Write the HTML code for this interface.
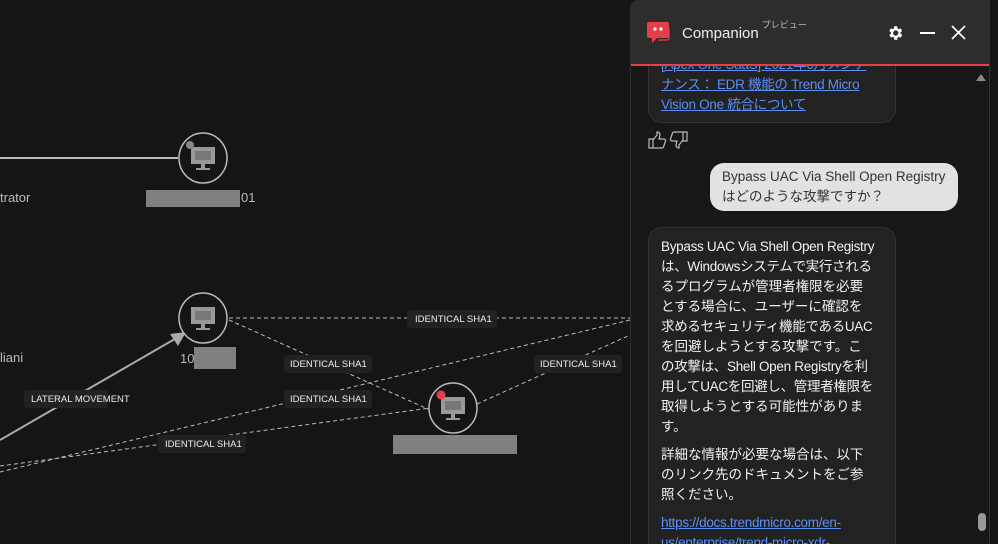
<!DOCTYPE html>
<html><head><meta charset="utf-8"><style>
*{margin:0;padding:0;box-sizing:border-box}
body{width:998px;height:544px;overflow:hidden;background:#151515;font-family:"Liberation Sans","Noto Sans CJK JP",sans-serif;position:relative}
svg.g{position:absolute;left:0;top:0}
.panel{position:absolute;left:630px;top:0;width:360px;height:544px;background:#171717;border-left:1px solid #2e2e2e;border-right:1px solid #333;border-top-left-radius:8px;overflow:hidden}
.hdr{position:absolute;left:0;top:0;width:360px;height:66px;background:#2d2d2d;border-bottom:2px solid #e5404a;z-index:2}
.title{position:absolute;left:51px;top:22px;color:#eee;font-size:15px}
.title sup{font-size:9px;color:#bbb;position:relative;top:-4px;margin-left:3px}
.bub{position:absolute;background:#222;border:1px solid #333;border-radius:14px;color:#f2f2f2;font-size:13.5px;line-height:20px;white-space:nowrap}
.bub .l{letter-spacing:-0.3px}
a{color:#5b8ff2;text-decoration:underline}
.user{position:absolute;left:79px;top:163px;width:248px;height:48px;background:#e2e2e2;border-radius:14px;color:#333;font-size:13.5px;line-height:20px;padding:4px 12px;white-space:nowrap}
</style></head><body>
<svg class="g" width="630" height="544" font-family="Liberation Sans,sans-serif">
<g stroke="#bbb" stroke-width="1" stroke-dasharray="4,3" fill="none">
<line x1="229" y1="318" x2="630" y2="318"/>
<line x1="229" y1="320" x2="430" y2="410"/>
<line x1="0" y1="472" x2="630" y2="320"/>
<line x1="0" y1="466" x2="430" y2="408"/>
<line x1="477" y1="404" x2="630" y2="335"/>
</g>
<line x1="0" y1="158" x2="178" y2="158" stroke="#bbb" stroke-width="2"/>
<line x1="0" y1="440" x2="180" y2="336" stroke="#aaa" stroke-width="2"/>
<polygon points="186,332 170,334 178,346" fill="#aaa"/>
<g fill="#151515" stroke="#bbb" stroke-width="1.5">
<ellipse cx="203" cy="158" rx="24" ry="25"/>
<ellipse cx="203" cy="318" rx="24" ry="25"/>
<ellipse cx="453" cy="408" rx="24" ry="25"/>
</g>
<g fill="#999">
<rect x="191" y="147" width="24" height="17"/><rect x="201" y="164" width="4" height="4"/><rect x="196" y="168" width="14" height="2"/>
<rect x="191" y="307" width="24" height="17"/><rect x="201" y="324" width="4" height="4"/><rect x="196" y="328" width="14" height="2"/>
<rect x="441" y="397" width="24" height="17"/><rect x="451" y="414" width="4" height="4"/><rect x="446" y="418" width="14" height="2"/>
</g>
<g fill="#777"><rect x="195" y="151" width="16" height="9"/><rect x="195" y="311" width="16" height="9"/><rect x="445" y="401" width="16" height="9"/></g>
<circle cx="190" cy="145" r="4" fill="#888"/>
<circle cx="441" cy="395" r="4.5" fill="#e5404a"/>
<rect x="146" y="190" width="94" height="17" fill="#808080"/>
<rect x="194" y="347" width="42" height="22" fill="#808080"/>
<rect x="393" y="435" width="124" height="19" fill="#808080"/>
<g fill="#bbb" font-size="13"><text x="0" y="202">trator</text><text x="241" y="202">01</text><text x="0" y="362">liani</text><text x="180" y="363">10</text></g>
<g font-size="9.5" fill="#eee">
<rect x="407" y="310" width="90" height="18" rx="3" fill="#222"/><text x="415" y="322">IDENTICAL SHA1</text>
<rect x="284" y="355" width="88" height="18" rx="3" fill="#222"/><text x="290" y="367">IDENTICAL SHA1</text>
<rect x="534" y="355" width="88" height="18" rx="3" fill="#222"/><text x="540" y="367">IDENTICAL SHA1</text>
<rect x="284" y="390" width="88" height="18" rx="3" fill="#222"/><text x="290" y="402">IDENTICAL SHA1</text>
<rect x="158" y="435" width="88" height="18" rx="3" fill="#222"/><text x="165" y="447">IDENTICAL SHA1</text>
<rect x="24" y="390" width="84" height="18" rx="3" fill="#222"/><text x="31" y="402">LATERAL MOVEMENT</text>
</g>
</svg>
<div class="panel">
<div class="hdr">
<svg style="position:absolute;left:15px;top:20px" width="26" height="26" viewBox="0 0 26 26"><path d="M3 2h18a2 2 0 0 1 2 2v12a2 2 0 0 1-2 2H11l-5 5v-5H3a2 2 0 0 1-2-2V4a2 2 0 0 1 2-2z" fill="#e5404a"/><path d="M23 8v10a2 2 0 0 1-2 2H12" stroke="#e5404a" fill="none" stroke-width="1.2"/><circle cx="9" cy="9" r="1.6" fill="#fff"/><circle cx="15" cy="9" r="1.6" fill="#fff"/></svg>
<div class="title">Companion<sup>プレビュー</sup></div>
<svg style="position:absolute;left:255px;top:24px" width="18" height="18" viewBox="0 0 24 24"><path fill="#fff" d="M19.4 13a7.5 7.5 0 0 0 0-2l2.1-1.6-2-3.5-2.5 1a7 7 0 0 0-1.7-1L15 3h-4l-.4 2.9a7 7 0 0 0-1.7 1l-2.5-1-2 3.5L6.6 11a7.5 7.5 0 0 0 0 2l-2.1 1.6 2 3.5 2.5-1a7 7 0 0 0 1.7 1L11 21h4l.4-2.9a7 7 0 0 0 1.7-1l2.5 1 2-3.5zM13 15.5A3.5 3.5 0 1 1 13 8.5a3.5 3.5 0 0 1 0 7z"/></svg>
<div style="position:absolute;left:289px;top:32px;width:15px;height:2px;background:#fff"></div>
<svg style="position:absolute;left:320px;top:25px" width="15" height="15"><path d="M1 1L14 14M14 1L1 14" stroke="#fff" stroke-width="1.7"/></svg>
</div>
<div class="bub" style="left:17px;top:20px;width:248px;height:103px;padding:34px 12px 0 12px"><a class="l">[Apex One SaaS] 2021年6月メンテ</a><br><a class="l">ナンス： EDR 機能の Trend Micro</a><br><a class="l">Vision One 統合について</a></div>
<svg style="position:absolute;left:17px;top:131px" width="40" height="18" viewBox="0 0 40 18" fill="none" stroke="#bbb" stroke-width="1.2"><path d="M1 8h4v9H1zM5 9l4-5V1c2 0 3 1 3 3l-1 4h5c1 0 2 1 1.5 2l-2 6c-.3.7-1 1-1.5 1H5"/><path d="M39 10h-4V1h4zM35 9l-4 5v3c-2 0-3-1-3-3l1-4h-5c-1 0-2-1-1.5-2l2-6C24.8 1.3 25.5 1 26 1h9"/></svg>
<div class="user">Bypass UAC Via Shell Open Registry<br>はどのような攻撃ですか？</div>
<div class="bub" style="left:17px;top:227px;width:248px;height:340px;padding:9px 12px"><span class="l">Bypass UAC Via Shell Open Registry</span><br><span class="l">は、Windowsシステムで実行される</span><br>るプログラムが管理者権限を必要<br>とする場合に、ユーザーに確認を<br><span class="l">求めるセキュリティ機能であるUAC</span><br>を回避しようとする攻撃です。こ<br><span class="l">の攻撃は、Shell Open Registryを利</span><br><span class="l">用してUACを回避し、管理者権限を</span><br>取得しようとする可能性がありま<br>す。<div style="margin-top:8px">詳細な情報が必要な場合は、以下<br>のリンク先のドキュメントをご参<br>照ください。</div><div style="margin-top:8px"><a class="l">https://docs.trendmicro.com/en-</a><br><a class="l">us/enterprise/trend-micro-xdr-</a></div></div>
<div style="position:absolute;left:345px;top:74px;width:0;height:0;border-left:5px solid transparent;border-right:5px solid transparent;border-bottom:7px solid #888"></div>
<div style="position:absolute;left:347px;top:513px;width:8px;height:18px;border-radius:4px;background:#999"></div>
</div>
</body></html>
